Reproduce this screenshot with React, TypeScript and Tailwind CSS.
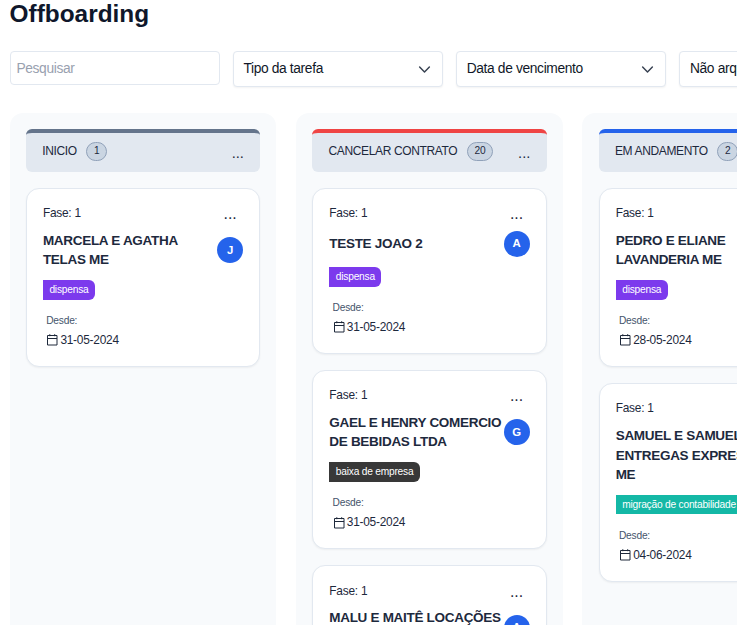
import React from "react";

type Task = {
  name: string[];
  initial: string;
  tag: string;
  tagColor: string;
  since: string;
};

type Column = {
  title: string;
  count: number;
  accent: string;
  tasks: Task[];
};

const columns: Column[] = [
  {
    title: "INICIO",
    count: 1,
    accent: "border-t-[#64748b]",
    tasks: [
      { name: ["MARCELA E AGATHA", "TELAS ME"], initial: "J", tag: "dispensa", tagColor: "bg-[#7c3aed]", since: "31-05-2024" },
    ],
  },
  {
    title: "CANCELAR CONTRATO",
    count: 20,
    accent: "border-t-[#ef4444]",
    tasks: [
      { name: ["TESTE JOAO 2"], initial: "A", tag: "dispensa", tagColor: "bg-[#7c3aed]", since: "31-05-2024" },
      { name: ["GAEL E HENRY COMERCIO", "DE BEBIDAS LTDA"], initial: "G", tag: "baixa de empresa", tagColor: "bg-[#383838]", since: "31-05-2024" },
      { name: ["MALU E MAITÊ LOCAÇÕES", "ME"], initial: "A", tag: "dispensa", tagColor: "bg-[#7c3aed]", since: "31-05-2024" },
    ],
  },
  {
    title: "EM ANDAMENTO",
    count: 2,
    accent: "border-t-[#2563eb]",
    tasks: [
      { name: ["PEDRO E ELIANE", "LAVANDERIA ME"], initial: "A", tag: "dispensa", tagColor: "bg-[#7c3aed]", since: "28-05-2024" },
      { name: ["SAMUEL E SAMUEL", "ENTREGAS EXPRESS", "ME"], initial: "A", tag: "migração de contabilidade", tagColor: "bg-[#14b8a6]", since: "04-06-2024" },
    ],
  },
];

function Chevron() {
  return (
    <svg className="size-[13px]" viewBox="0 0 16 16" fill="none" stroke="#374151" strokeWidth="1.8" strokeLinecap="round" strokeLinejoin="round">
      <path d="M2 5l6 6 6-6" />
    </svg>
  );
}

function Calendar() {
  return (
    <svg className="h-[12px] w-[11px]" viewBox="0 0 11 12" fill="none" stroke="#1e293b" strokeWidth="1">
      <path d="M0.5 1.5h9.5v9.5h-9.5zM0.5 4.5h9.5M2.8 0.2v2M7.7 0.2v2" />
    </svg>
  );
}

function Select({ label }: { label: string }) {
  return (
    <div className="flex h-[36px] w-[210.2px] shrink-0 items-center justify-between rounded-[4px] border border-slate-200 bg-white pl-[9.5px] pr-[11px] text-[13.8px] tracking-[-0.36px] text-gray-900 shadow-xs">
      <span className="whitespace-nowrap">{label}</span>
      <Chevron />
    </div>
  );
}

function Card({ task }: { task: Task }) {
  return (
    <article className="rounded-[13px] border border-slate-200 bg-white px-[16px] pt-[16.2px] pb-[17.2px] shadow-xs">
      <div className="flex h-[25.6px] items-start justify-between text-slate-800">
        <span className="text-[11.9px] leading-[16.3px] tracking-[-0.24px]">Fase: 1</span>
        <span className="w-[26px] text-center text-[15.8px] leading-[17.5px]">...</span>
      </div>
      <div className="flex min-h-[26px] items-center justify-between">
        <h3 className="text-[13.5px] leading-[19.53px] font-bold tracking-[-0.3px] whitespace-nowrap text-slate-800">
          {task.name.map((line) => (
            <span key={line} className="block">{line}</span>
          ))}
        </h3>
        <span className="flex size-[26px] shrink-0 items-center justify-center rounded-full bg-[#2563eb] text-[11.39px] font-bold text-white">
          {task.initial}
        </span>
      </div>
      <div className="mt-[10.4px] flex">
        <span className={`${task.tagColor} h-[19.5px] rounded-r-[6px] px-[6.5px] text-[10.2px] leading-[19.5px] tracking-[-0.21px] whitespace-nowrap text-white`}>
          {task.tag}
        </span>
      </div>
      <div className="mt-[14.5px] pl-[3.3px]">
        <p className="text-[10.2px] leading-[13px] tracking-[-0.21px] text-slate-600">Desde:</p>
        <p className="mt-[5.1px] flex items-center gap-[2px] pl-[1.2px] text-[11.9px] leading-[16.3px] tracking-[-0.24px] text-slate-800">
          <Calendar />
          <span>{task.since}</span>
        </p>
      </div>
    </article>
  );
}

export default function App() {
  return (
    <main className="h-[625px] w-full overflow-hidden bg-white pl-[9.6px] font-['Liberation_Sans',Arial,sans-serif]">
      <h1 className="text-[24.4px] leading-[27px] font-bold text-slate-900">Offboarding</h1>
      <div className="mt-[24.3px] flex items-start gap-[13.1px]">
        <input
          placeholder="Pesquisar"
          className="h-[34.2px] w-[210.2px] shrink-0 rounded-[4px] border border-slate-200 bg-white px-[5.8px] text-[13.8px] tracking-[-0.36px] placeholder:text-gray-400"
        />
        <Select label="Tipo da tarefa" />
        <Select label="Data de vencimento" />
        <Select label="Não arquivadas" />
      </div>
      <div className="mt-[25.8px] flex gap-[19.5px]">
        {columns.map((column) => (
          <section key={column.title} className="h-[600px] w-[266.9px] shrink-0 rounded-[13px] bg-slate-50 p-[16.3px]">
            <header className={`${column.accent} flex h-[42.3px] items-center justify-between rounded-[6px] border-t-4 bg-slate-200 px-[16.3px] text-slate-800`}>
              <div className="flex items-center gap-[9.8px] pb-[3px]">
                <h2 className="text-[12px] leading-[16px] tracking-[-0.37px]">{column.title}</h2>
                <span className="flex h-[19px] items-center rounded-full border border-slate-400 bg-slate-300 px-[6.5px] text-[10.2px] tracking-[-0.21px]">
                  {column.count}
                </span>
              </div>
              <span className="text-[14.65px] leading-[18px]">...</span>
            </header>
            <div className="mt-[16.3px] flex flex-col gap-[16.4px]">
              {column.tasks.map((task) => (
                <Card key={task.name[0]} task={task} />
              ))}
            </div>
          </section>
        ))}
      </div>
    </main>
  );
}
